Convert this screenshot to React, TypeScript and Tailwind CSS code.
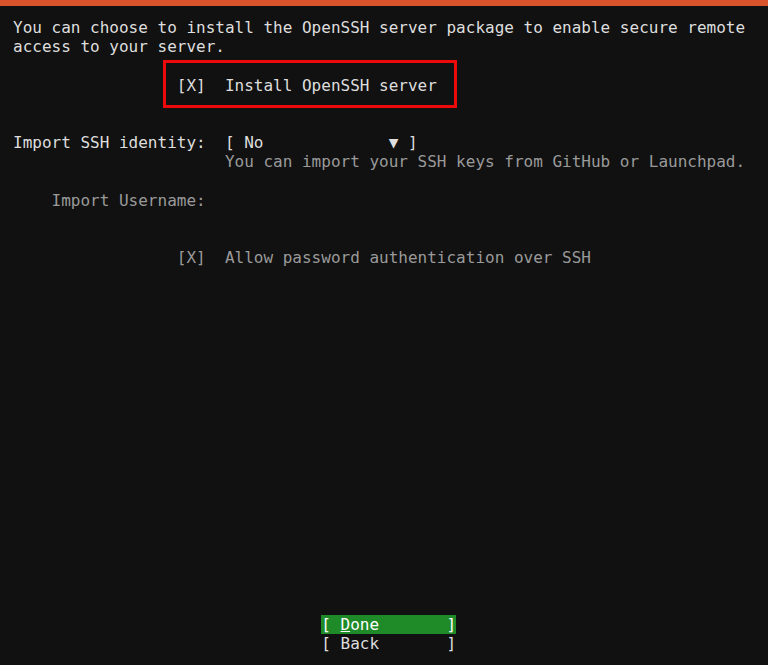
import React from "react";

const Row = ({ children, className = "" }: { children?: React.ReactNode; className?: string }) => (
  <div className={"h-[19.2px] whitespace-pre " + className}>{children}</div>
);

export default function App() {
  return (
    <div
      className="w-[768px] h-[665px] bg-[#111111] flex flex-col overflow-hidden text-[16px] leading-[19.2px] text-[#dedede]"
      style={{ fontFamily: '"DejaVu Sans Mono", "Liberation Mono", monospace' }}
    >
      <div className="h-[6px] bg-[#d9532b] shrink-0" />
      <div className="relative flex-1 flex flex-col pl-[13px] pt-[12px] pb-[12px]">
        <Row>You can choose to install the OpenSSH server package to enable secure remote</Row>
        <Row>access to your server.</Row>
        <Row />
        <Row>{"                 [X]  Install OpenSSH server"}</Row>
        <Row />
        <Row />
        <Row>{"Import SSH identity:  [ No             ▼ ]"}</Row>
        <Row className="text-[#9a9a9a]">{"                      You can import your SSH keys from GitHub or Launchpad."}</Row>
        <Row />
        <Row className="text-[#9a9a9a]">{"    Import Username:"}</Row>
        <Row />
        <Row />
        <Row className="text-[#9a9a9a]">{"                 [X]  Allow password authentication over SSH"}</Row>

        <div className="flex-1" />
        <Row>
          {"                                "}
          <span className="bg-[#1e8a28] text-white">
            {"[ "}
            <span className="underline">D</span>
            {"one       ]"}
          </span>
        </Row>
        <Row>{"                                [ Back       ]"}</Row>

        <div className="absolute left-[163px] top-[54px] w-[294px] h-[48px] border-[3px] border-[#ee0a0a]" />
      </div>
    </div>
  );
}
